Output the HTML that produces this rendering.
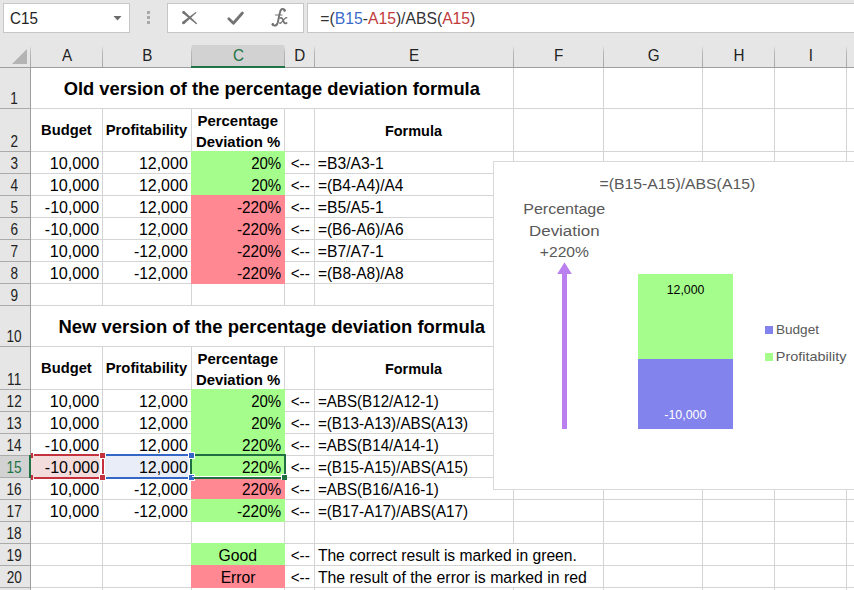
<!DOCTYPE html>
<html><head><meta charset="utf-8"><title>Excel</title>
<style>html,body{margin:0;padding:0;background:#fff;width:854px;height:590px;overflow:hidden;font-family:"Liberation Sans",sans-serif} svg{display:block}</style>
</head><body>
<svg width="854" height="590" viewBox="0 0 854 590">
<defs><linearGradient id="sepgrad" x1="0" y1="0" x2="0" y2="1"><stop offset="0" stop-color="#e6e6e6"/><stop offset="0.35" stop-color="#b8b8b8"/><stop offset="1" stop-color="#a8a8a8"/></linearGradient></defs>
<rect x="0" y="0" width="854" height="590" fill="#ffffff" />
<rect x="0" y="0" width="854" height="45" fill="#e6e6e6" />
<rect x="3.5" y="3.5" width="126" height="29" fill="#ffffff" stroke="#c6c6c6" stroke-width="1"/>
<path d="M113.5 16 L121.5 16 L117.5 20.5 Z" fill="#6b6b6b" shape-rendering="auto"/>
<rect x="147" y="11" width="3" height="3" fill="#a9a9a9" />
<rect x="147" y="16" width="3" height="3" fill="#a9a9a9" />
<rect x="147" y="21" width="3" height="3" fill="#a9a9a9" />
<rect x="167.5" y="3.5" width="136" height="29" fill="#ffffff" stroke="#c6c6c6" stroke-width="1"/>
<rect x="307.5" y="3.5" width="560" height="29" fill="#ffffff" stroke="#c6c6c6" stroke-width="1"/>
<path d="M182.71 13.31 L195.97 24.09 L196.83 23.11 L184.49 11.29 Z" fill="#737373"/>
<circle cx="183.6" cy="12.3" r="1.35" fill="#737373"/>
<circle cx="196.4" cy="23.6" r="0.65" fill="#737373"/>
<path d="M195.42 12.14 L182.54 21.86 L184.26 23.94 L196.18 13.06 Z" fill="#737373"/>
<circle cx="195.8" cy="12.6" r="0.6" fill="#737373"/>
<circle cx="183.4" cy="22.9" r="1.35" fill="#737373"/>
<path d="M228.8 18.8 L233.4 23.2 L242.4 13" stroke="#737373" stroke-width="2.8" fill="none" stroke-linecap="round" stroke-linejoin="round"/>
<g fill="none" stroke="#737373" stroke-linecap="round"><path d="M284.8 10.4 Q284 8.5 282 9 Q280.4 9.6 279.9 12.5 L277.8 22.4 Q277 25.6 274.4 25.6 Q272.8 25.5 272.6 24.4" stroke-width="1.9"/><path d="M275.5 15 L282 15" stroke-width="1.2"/><path d="M280.2 18 Q281.8 17.2 282.6 19.2 L284.2 22.8 Q285 24 286.6 23" stroke-width="1.7"/><path d="M286.8 17.8 Q286 17.4 285 18.4 L281.2 22.6 Q280.4 23.6 279.6 23" stroke-width="1.3"/></g>
<circle cx="284.5" cy="10.6" r="1.25" fill="#737373"/>
<circle cx="272.9" cy="24.2" r="1.25" fill="#737373"/>
<rect x="0" y="45" width="854" height="22" fill="#e6e6e6" />
<rect x="0" y="67" width="30" height="523" fill="#e6e6e6" />
<rect x="192" y="45" width="92" height="22" fill="#d2d2d2" />
<rect x="0" y="456" width="30" height="21" fill="#d2d2d2" />
<rect x="102" y="108" width="1" height="197" fill="#d4d4d4" />
<rect x="102" y="346" width="1" height="244" fill="#d4d4d4" />
<rect x="191" y="108" width="1" height="197" fill="#d4d4d4" />
<rect x="191" y="346" width="1" height="244" fill="#d4d4d4" />
<rect x="284" y="108" width="1" height="197" fill="#d4d4d4" />
<rect x="284" y="346" width="1" height="244" fill="#d4d4d4" />
<rect x="314" y="108" width="1" height="197" fill="#d4d4d4" />
<rect x="314" y="346" width="1" height="244" fill="#d4d4d4" />
<rect x="513" y="67" width="1" height="476" fill="#d4d4d4" />
<rect x="513" y="587" width="1" height="3" fill="#d4d4d4" />
<rect x="603" y="67" width="1" height="523" fill="#d4d4d4" />
<rect x="702" y="67" width="1" height="523" fill="#d4d4d4" />
<rect x="774" y="67" width="1" height="523" fill="#d4d4d4" />
<rect x="846" y="67" width="1" height="523" fill="#d4d4d4" />
<rect x="31" y="108" width="823" height="1" fill="#d4d4d4" />
<rect x="31" y="151" width="823" height="1" fill="#d4d4d4" />
<rect x="31" y="173" width="823" height="1" fill="#d4d4d4" />
<rect x="31" y="195" width="823" height="1" fill="#d4d4d4" />
<rect x="31" y="217" width="823" height="1" fill="#d4d4d4" />
<rect x="31" y="239" width="823" height="1" fill="#d4d4d4" />
<rect x="31" y="261" width="823" height="1" fill="#d4d4d4" />
<rect x="31" y="283" width="823" height="1" fill="#d4d4d4" />
<rect x="31" y="305" width="823" height="1" fill="#d4d4d4" />
<rect x="31" y="346" width="823" height="1" fill="#d4d4d4" />
<rect x="31" y="389" width="823" height="1" fill="#d4d4d4" />
<rect x="31" y="411" width="823" height="1" fill="#d4d4d4" />
<rect x="31" y="433" width="823" height="1" fill="#d4d4d4" />
<rect x="31" y="455" width="823" height="1" fill="#d4d4d4" />
<rect x="31" y="477" width="823" height="1" fill="#d4d4d4" />
<rect x="31" y="499" width="823" height="1" fill="#d4d4d4" />
<rect x="31" y="521" width="823" height="1" fill="#d4d4d4" />
<rect x="31" y="543" width="823" height="1" fill="#d4d4d4" />
<rect x="31" y="565" width="823" height="1" fill="#d4d4d4" />
<rect x="31" y="587" width="823" height="1" fill="#d4d4d4" />
<rect x="102" y="45" width="1" height="22" fill="url(#sepgrad)"/>
<rect x="191" y="45" width="1" height="22" fill="url(#sepgrad)"/>
<rect x="284" y="45" width="1" height="22" fill="url(#sepgrad)"/>
<rect x="314" y="45" width="1" height="22" fill="url(#sepgrad)"/>
<rect x="513" y="45" width="1" height="22" fill="url(#sepgrad)"/>
<rect x="603" y="45" width="1" height="22" fill="url(#sepgrad)"/>
<rect x="702" y="45" width="1" height="22" fill="url(#sepgrad)"/>
<rect x="774" y="45" width="1" height="22" fill="url(#sepgrad)"/>
<rect x="846" y="45" width="1" height="22" fill="url(#sepgrad)"/>
<rect x="0" y="67" width="854" height="1" fill="#9e9e9e" />
<rect x="30" y="45" width="1" height="545" fill="#9e9e9e" />
<rect x="30" y="45" width="1" height="22" fill="url(#sepgrad)"/>
<rect x="0" y="108" width="30" height="1" fill="#ababab" />
<rect x="0" y="151" width="30" height="1" fill="#ababab" />
<rect x="0" y="173" width="30" height="1" fill="#ababab" />
<rect x="0" y="195" width="30" height="1" fill="#ababab" />
<rect x="0" y="217" width="30" height="1" fill="#ababab" />
<rect x="0" y="239" width="30" height="1" fill="#ababab" />
<rect x="0" y="261" width="30" height="1" fill="#ababab" />
<rect x="0" y="283" width="30" height="1" fill="#ababab" />
<rect x="0" y="305" width="30" height="1" fill="#ababab" />
<rect x="0" y="346" width="30" height="1" fill="#ababab" />
<rect x="0" y="389" width="30" height="1" fill="#ababab" />
<rect x="0" y="411" width="30" height="1" fill="#ababab" />
<rect x="0" y="433" width="30" height="1" fill="#ababab" />
<rect x="0" y="455" width="30" height="1" fill="#ababab" />
<rect x="0" y="477" width="30" height="1" fill="#ababab" />
<rect x="0" y="499" width="30" height="1" fill="#ababab" />
<rect x="0" y="521" width="30" height="1" fill="#ababab" />
<rect x="0" y="543" width="30" height="1" fill="#ababab" />
<rect x="0" y="565" width="30" height="1" fill="#ababab" />
<rect x="0" y="587" width="30" height="1" fill="#ababab" />
<rect x="191" y="66" width="94" height="2" fill="#217346" />
<rect x="29" y="455" width="2" height="23" fill="#217346" />
<path d="M12 64 L27 49 L27 64 Z" fill="#b4b4b4" shape-rendering="auto"/>
<rect x="191" y="151" width="94" height="44" fill="#a5fe8b" />
<rect x="191" y="195" width="94" height="89" fill="#ff8893" />
<rect x="191" y="389" width="94" height="88" fill="#a5fe8b" />
<rect x="191" y="477" width="94" height="22" fill="#ff8893" />
<rect x="191" y="499" width="94" height="23" fill="#a5fe8b" />
<rect x="191" y="543" width="94" height="22" fill="#a5fe8b" />
<rect x="191" y="565" width="94" height="23" fill="#ff8893" />
<rect x="31" y="456" width="69" height="21" fill="#f2dcdc" />
<rect x="105" y="456" width="84" height="21" fill="#e9edf7" />
<rect x="493.5" y="161.5" width="400" height="328" fill="#ffffff" stroke="#d9d9d9" stroke-width="1"/>
<path d="M564.5 262.3 L571.8 274 L557.2 274 Z" fill="#bb80f0" shape-rendering="auto"/>
<rect x="562" y="273" width="5" height="156" fill="#bb80f0" />
<rect x="638" y="274" width="95" height="85" fill="#a5fe8b" />
<rect x="638" y="359" width="95" height="70" fill="#8383ed" />
<rect x="765" y="326" width="8" height="8" fill="#8383ed" />
<rect x="765" y="353" width="8" height="8" fill="#a5fe8b" />
<rect x="106" y="454" width="82" height="2" fill="#3366c6" />
<rect x="106" y="477" width="82" height="2" fill="#3366c6" />
<rect x="34" y="454" width="65" height="2" fill="#c4323e" />
<rect x="34" y="477" width="65" height="2" fill="#c4323e" />
<rect x="102" y="459" width="2" height="15" fill="#c4323e" />
<rect x="99" y="452" width="7" height="7" fill="#ffffff" />
<rect x="100" y="453" width="5" height="5" fill="#c4323e" />
<rect x="99" y="474" width="7" height="7" fill="#ffffff" />
<rect x="100" y="475" width="5" height="5" fill="#c4323e" />
<rect x="31" y="453" width="2" height="5" fill="#c4323e" />
<rect x="31" y="475" width="2" height="5" fill="#c4323e" />
<rect x="188" y="452" width="7" height="7" fill="#ffffff" />
<rect x="189" y="453" width="5" height="5" fill="#3366c6" />
<rect x="188" y="474" width="7" height="7" fill="#ffffff" />
<rect x="189" y="475" width="5" height="5" fill="#3366c6" />
<rect x="195" y="454" width="91" height="2" fill="#1f6f43" />
<rect x="190" y="459" width="2" height="15" fill="#1f6f43" />
<rect x="284" y="454" width="2" height="20" fill="#1f6f43" />
<rect x="194" y="477" width="87" height="2" fill="#1f6f43" />
<rect x="192" y="476" width="89" height="1" fill="#ffffff" />
<rect x="281" y="474" width="6" height="6" fill="#ffffff" />
<rect x="282" y="475" width="5" height="5" fill="#1f6f43" />
<g font-family="Liberation Sans, sans-serif" shape-rendering="auto">
<text x="10.04" y="24.00" font-size="16" textLength="27.81" lengthAdjust="spacingAndGlyphs" fill="#222">C15</text>
<text x="320.37" y="24.00" font-size="16" textLength="154.96" lengthAdjust="spacingAndGlyphs"><tspan fill="#333">=(</tspan><tspan fill="#3a6bc8">B15</tspan><tspan fill="#333">-</tspan><tspan fill="#c23b3b">A15</tspan><tspan fill="#333">)/ABS(</tspan><tspan fill="#c23b3b">A15</tspan><tspan fill="#333">)</tspan></text>
<text x="61.91" y="61.00" font-size="16" textLength="10.14" lengthAdjust="spacingAndGlyphs" fill="#222222">A</text>
<text x="142.18" y="61.00" font-size="16" textLength="10.14" lengthAdjust="spacingAndGlyphs" fill="#222222">B</text>
<text x="232.88" y="61.00" font-size="16" textLength="10.98" lengthAdjust="spacingAndGlyphs" fill="#217346">C</text>
<text x="294.22" y="61.00" font-size="16" textLength="10.98" lengthAdjust="spacingAndGlyphs" fill="#222222">D</text>
<text x="409.10" y="61.00" font-size="16" textLength="10.14" lengthAdjust="spacingAndGlyphs" fill="#222222">E</text>
<text x="553.98" y="61.00" font-size="16" textLength="9.28" lengthAdjust="spacingAndGlyphs" fill="#222222">F</text>
<text x="647.72" y="61.00" font-size="16" textLength="11.82" lengthAdjust="spacingAndGlyphs" fill="#222222">G</text>
<text x="733.45" y="61.00" font-size="16" textLength="10.98" lengthAdjust="spacingAndGlyphs" fill="#222222">H</text>
<text x="808.87" y="61.00" font-size="16" textLength="4.22" lengthAdjust="spacingAndGlyphs" fill="#222222">I</text>
<text x="10.36" y="103.90" font-size="16" textLength="7.56" lengthAdjust="spacingAndGlyphs" fill="#222222">1</text>
<text x="10.49" y="146.90" font-size="16" textLength="7.56" lengthAdjust="spacingAndGlyphs" fill="#222222">2</text>
<text x="10.56" y="168.90" font-size="16" textLength="7.56" lengthAdjust="spacingAndGlyphs" fill="#222222">3</text>
<text x="10.56" y="190.90" font-size="16" textLength="7.56" lengthAdjust="spacingAndGlyphs" fill="#222222">4</text>
<text x="10.49" y="212.90" font-size="16" textLength="7.56" lengthAdjust="spacingAndGlyphs" fill="#222222">5</text>
<text x="10.42" y="234.90" font-size="16" textLength="7.56" lengthAdjust="spacingAndGlyphs" fill="#222222">6</text>
<text x="10.49" y="256.90" font-size="16" textLength="7.56" lengthAdjust="spacingAndGlyphs" fill="#222222">7</text>
<text x="10.49" y="278.90" font-size="16" textLength="7.56" lengthAdjust="spacingAndGlyphs" fill="#222222">8</text>
<text x="10.56" y="300.90" font-size="16" textLength="7.56" lengthAdjust="spacingAndGlyphs" fill="#222222">9</text>
<text x="6.51" y="341.90" font-size="16" textLength="15.13" lengthAdjust="spacingAndGlyphs" fill="#222222">10</text>
<text x="7.08" y="384.90" font-size="16" textLength="14.12" lengthAdjust="spacingAndGlyphs" fill="#222222">11</text>
<text x="6.57" y="406.90" font-size="16" textLength="15.13" lengthAdjust="spacingAndGlyphs" fill="#222222">12</text>
<text x="6.51" y="428.90" font-size="16" textLength="15.13" lengthAdjust="spacingAndGlyphs" fill="#222222">13</text>
<text x="6.44" y="450.90" font-size="16" textLength="15.13" lengthAdjust="spacingAndGlyphs" fill="#222222">14</text>
<text x="6.51" y="472.90" font-size="16" textLength="15.13" lengthAdjust="spacingAndGlyphs" fill="#217346">15</text>
<text x="6.51" y="494.90" font-size="16" textLength="15.13" lengthAdjust="spacingAndGlyphs" fill="#222222">16</text>
<text x="6.57" y="516.90" font-size="16" textLength="15.13" lengthAdjust="spacingAndGlyphs" fill="#222222">17</text>
<text x="6.51" y="538.90" font-size="16" textLength="15.13" lengthAdjust="spacingAndGlyphs" fill="#222222">18</text>
<text x="6.57" y="560.90" font-size="16" textLength="15.13" lengthAdjust="spacingAndGlyphs" fill="#222222">19</text>
<text x="6.64" y="582.90" font-size="16" textLength="15.13" lengthAdjust="spacingAndGlyphs" fill="#222222">20</text>
<text x="63.77" y="94.60" font-size="19" font-weight="bold" textLength="416.08" lengthAdjust="spacingAndGlyphs" fill="#000">Old version of the percentage deviation formula</text>
<text x="58.49" y="332.50" font-size="19" font-weight="bold" textLength="426.65" lengthAdjust="spacingAndGlyphs" fill="#000">New version of the percentage deviation formula</text>
<text x="41.12" y="135.30" font-size="15" font-weight="bold" textLength="50.63" lengthAdjust="spacingAndGlyphs" fill="#000">Budget</text>
<text x="105.71" y="135.30" font-size="15" font-weight="bold" textLength="81.43" lengthAdjust="spacingAndGlyphs" fill="#000">Profitability</text>
<text x="197.50" y="126.00" font-size="15" font-weight="bold" textLength="80.49" lengthAdjust="spacingAndGlyphs" fill="#000">Percentage</text>
<text x="195.91" y="147.30" font-size="15" font-weight="bold" textLength="84.38" lengthAdjust="spacingAndGlyphs" fill="#000">Deviation %</text>
<text x="384.93" y="135.80" font-size="15" font-weight="bold" textLength="57.07" lengthAdjust="spacingAndGlyphs" fill="#000">Formula</text>
<text x="41.12" y="373.30" font-size="15" font-weight="bold" textLength="50.63" lengthAdjust="spacingAndGlyphs" fill="#000">Budget</text>
<text x="105.71" y="373.30" font-size="15" font-weight="bold" textLength="81.43" lengthAdjust="spacingAndGlyphs" fill="#000">Profitability</text>
<text x="197.50" y="364.00" font-size="15" font-weight="bold" textLength="80.49" lengthAdjust="spacingAndGlyphs" fill="#000">Percentage</text>
<text x="195.91" y="385.30" font-size="15" font-weight="bold" textLength="84.38" lengthAdjust="spacingAndGlyphs" fill="#000">Deviation %</text>
<text x="384.93" y="373.80" font-size="15" font-weight="bold" textLength="57.07" lengthAdjust="spacingAndGlyphs" fill="#000">Formula</text>
<text x="49.77" y="168.80" font-size="16" textLength="49.52" lengthAdjust="spacingAndGlyphs" fill="#000">10,000</text>
<text x="138.88" y="168.80" font-size="16" fill="#000">12,000</text>
<text x="251.15" y="168.80" font-size="16" textLength="30.09" lengthAdjust="spacingAndGlyphs" fill="#000">20%</text>
<text x="290.69" y="168.80" font-size="16" textLength="19.07" lengthAdjust="spacingAndGlyphs" fill="#000">&lt;--</text>
<text x="317.87" y="168.80" font-size="16" textLength="65.85" lengthAdjust="spacingAndGlyphs" fill="#000">=B3/A3-1</text>
<text x="49.77" y="190.80" font-size="16" textLength="49.52" lengthAdjust="spacingAndGlyphs" fill="#000">10,000</text>
<text x="138.88" y="190.80" font-size="16" fill="#000">12,000</text>
<text x="251.15" y="190.80" font-size="16" textLength="30.09" lengthAdjust="spacingAndGlyphs" fill="#000">20%</text>
<text x="290.69" y="190.80" font-size="16" textLength="19.07" lengthAdjust="spacingAndGlyphs" fill="#000">&lt;--</text>
<text x="317.88" y="190.80" font-size="16" textLength="85.52" lengthAdjust="spacingAndGlyphs" fill="#000">=(B4-A4)/A4</text>
<text x="44.86" y="212.80" font-size="16" fill="#000">-10,000</text>
<text x="138.88" y="212.80" font-size="16" fill="#000">12,000</text>
<text x="236.89" y="212.80" font-size="16" textLength="44.36" lengthAdjust="spacingAndGlyphs" fill="#000">-220%</text>
<text x="290.69" y="212.80" font-size="16" textLength="19.07" lengthAdjust="spacingAndGlyphs" fill="#000">&lt;--</text>
<text x="317.87" y="212.80" font-size="16" textLength="65.85" lengthAdjust="spacingAndGlyphs" fill="#000">=B5/A5-1</text>
<text x="44.86" y="234.80" font-size="16" fill="#000">-10,000</text>
<text x="138.88" y="234.80" font-size="16" fill="#000">12,000</text>
<text x="236.89" y="234.80" font-size="16" textLength="44.36" lengthAdjust="spacingAndGlyphs" fill="#000">-220%</text>
<text x="290.69" y="234.80" font-size="16" textLength="19.07" lengthAdjust="spacingAndGlyphs" fill="#000">&lt;--</text>
<text x="317.88" y="234.80" font-size="16" textLength="85.68" lengthAdjust="spacingAndGlyphs" fill="#000">=(B6-A6)/A6</text>
<text x="49.77" y="256.80" font-size="16" textLength="49.52" lengthAdjust="spacingAndGlyphs" fill="#000">10,000</text>
<text x="133.97" y="256.80" font-size="16" textLength="53.81" lengthAdjust="spacingAndGlyphs" fill="#000">-12,000</text>
<text x="236.89" y="256.80" font-size="16" textLength="44.36" lengthAdjust="spacingAndGlyphs" fill="#000">-220%</text>
<text x="290.69" y="256.80" font-size="16" textLength="19.07" lengthAdjust="spacingAndGlyphs" fill="#000">&lt;--</text>
<text x="317.87" y="256.80" font-size="16" textLength="65.85" lengthAdjust="spacingAndGlyphs" fill="#000">=B7/A7-1</text>
<text x="49.77" y="278.80" font-size="16" textLength="49.52" lengthAdjust="spacingAndGlyphs" fill="#000">10,000</text>
<text x="133.97" y="278.80" font-size="16" textLength="53.81" lengthAdjust="spacingAndGlyphs" fill="#000">-12,000</text>
<text x="236.89" y="278.80" font-size="16" textLength="44.36" lengthAdjust="spacingAndGlyphs" fill="#000">-220%</text>
<text x="290.69" y="278.80" font-size="16" textLength="19.07" lengthAdjust="spacingAndGlyphs" fill="#000">&lt;--</text>
<text x="317.88" y="278.80" font-size="16" textLength="85.68" lengthAdjust="spacingAndGlyphs" fill="#000">=(B8-A8)/A8</text>
<text x="49.77" y="406.80" font-size="16" textLength="49.52" lengthAdjust="spacingAndGlyphs" fill="#000">10,000</text>
<text x="138.88" y="406.80" font-size="16" fill="#000">12,000</text>
<text x="251.15" y="406.80" font-size="16" textLength="30.09" lengthAdjust="spacingAndGlyphs" fill="#000">20%</text>
<text x="290.69" y="406.80" font-size="16" textLength="19.07" lengthAdjust="spacingAndGlyphs" fill="#000">&lt;--</text>
<text x="317.89" y="406.80" font-size="16" textLength="120.91" lengthAdjust="spacingAndGlyphs" fill="#000">=ABS(B12/A12-1)</text>
<text x="49.77" y="428.80" font-size="16" textLength="49.52" lengthAdjust="spacingAndGlyphs" fill="#000">10,000</text>
<text x="138.88" y="428.80" font-size="16" fill="#000">12,000</text>
<text x="251.15" y="428.80" font-size="16" textLength="30.09" lengthAdjust="spacingAndGlyphs" fill="#000">20%</text>
<text x="290.69" y="428.80" font-size="16" textLength="19.07" lengthAdjust="spacingAndGlyphs" fill="#000">&lt;--</text>
<text x="317.89" y="428.80" font-size="16" textLength="150.22" lengthAdjust="spacingAndGlyphs" fill="#000">=(B13-A13)/ABS(A13)</text>
<text x="44.86" y="450.80" font-size="16" fill="#000">-10,000</text>
<text x="138.88" y="450.80" font-size="16" fill="#000">12,000</text>
<text x="241.93" y="450.80" font-size="16" textLength="39.32" lengthAdjust="spacingAndGlyphs" fill="#000">220%</text>
<text x="290.69" y="450.80" font-size="16" textLength="19.07" lengthAdjust="spacingAndGlyphs" fill="#000">&lt;--</text>
<text x="317.89" y="450.80" font-size="16" textLength="120.91" lengthAdjust="spacingAndGlyphs" fill="#000">=ABS(B14/A14-1)</text>
<text x="44.86" y="472.80" font-size="16" fill="#000">-10,000</text>
<text x="138.88" y="472.80" font-size="16" fill="#000">12,000</text>
<text x="241.93" y="472.80" font-size="16" textLength="39.32" lengthAdjust="spacingAndGlyphs" fill="#000">220%</text>
<text x="290.69" y="472.80" font-size="16" textLength="19.07" lengthAdjust="spacingAndGlyphs" fill="#000">&lt;--</text>
<text x="317.89" y="472.80" font-size="16" textLength="150.22" lengthAdjust="spacingAndGlyphs" fill="#000">=(B15-A15)/ABS(A15)</text>
<text x="49.77" y="494.80" font-size="16" textLength="49.52" lengthAdjust="spacingAndGlyphs" fill="#000">10,000</text>
<text x="133.97" y="494.80" font-size="16" textLength="53.81" lengthAdjust="spacingAndGlyphs" fill="#000">-12,000</text>
<text x="241.93" y="494.80" font-size="16" textLength="39.32" lengthAdjust="spacingAndGlyphs" fill="#000">220%</text>
<text x="290.69" y="494.80" font-size="16" textLength="19.07" lengthAdjust="spacingAndGlyphs" fill="#000">&lt;--</text>
<text x="317.89" y="494.80" font-size="16" textLength="120.91" lengthAdjust="spacingAndGlyphs" fill="#000">=ABS(B16/A16-1)</text>
<text x="49.77" y="516.80" font-size="16" textLength="49.52" lengthAdjust="spacingAndGlyphs" fill="#000">10,000</text>
<text x="133.97" y="516.80" font-size="16" textLength="53.81" lengthAdjust="spacingAndGlyphs" fill="#000">-12,000</text>
<text x="236.89" y="516.80" font-size="16" textLength="44.36" lengthAdjust="spacingAndGlyphs" fill="#000">-220%</text>
<text x="290.69" y="516.80" font-size="16" textLength="19.07" lengthAdjust="spacingAndGlyphs" fill="#000">&lt;--</text>
<text x="317.89" y="516.80" font-size="16" textLength="150.22" lengthAdjust="spacingAndGlyphs" fill="#000">=(B17-A17)/ABS(A17)</text>
<text x="218.51" y="560.60" font-size="16" textLength="38.57" lengthAdjust="spacingAndGlyphs" fill="#000">Good</text>
<text x="220.65" y="582.70" font-size="16" textLength="34.86" lengthAdjust="spacingAndGlyphs" fill="#000">Error</text>
<text x="290.69" y="560.80" font-size="16" textLength="19.07" lengthAdjust="spacingAndGlyphs" fill="#000">&lt;--</text>
<text x="290.69" y="582.80" font-size="16" textLength="19.07" lengthAdjust="spacingAndGlyphs" fill="#000">&lt;--</text>
<text x="317.89" y="560.80" font-size="16" textLength="258.99" lengthAdjust="spacingAndGlyphs" fill="#000">The correct result is marked in green.</text>
<text x="317.88" y="582.90" font-size="16" textLength="269.00" lengthAdjust="spacingAndGlyphs" fill="#000">The result of the error is marked in red</text>
<text x="599.47" y="189.40" font-size="14.5" textLength="155.77" lengthAdjust="spacingAndGlyphs" fill="#595959">=(B15-A15)/ABS(A15)</text>
<text x="523.22" y="214.00" font-size="15.5" textLength="81.96" lengthAdjust="spacingAndGlyphs" fill="#595959">Percentage</text>
<text x="529.05" y="235.60" font-size="15.5" textLength="70.50" lengthAdjust="spacingAndGlyphs" fill="#595959">Deviation</text>
<text x="539.88" y="257.30" font-size="15.5" textLength="49.08" lengthAdjust="spacingAndGlyphs" fill="#595959">+220%</text>
<text x="666.74" y="294.00" font-size="12.8" textLength="37.71" lengthAdjust="spacingAndGlyphs" fill="#000">12,000</text>
<text x="664.30" y="419.00" font-size="12.8" textLength="42.15" lengthAdjust="spacingAndGlyphs" fill="#fff">-10,000</text>
<text x="775.91" y="333.70" font-size="13" textLength="43.06" lengthAdjust="spacingAndGlyphs" fill="#595959">Budget</text>
<text x="775.84" y="360.70" font-size="13" textLength="70.66" lengthAdjust="spacingAndGlyphs" fill="#595959">Profitability</text>
</g>
</svg>
</body></html>
